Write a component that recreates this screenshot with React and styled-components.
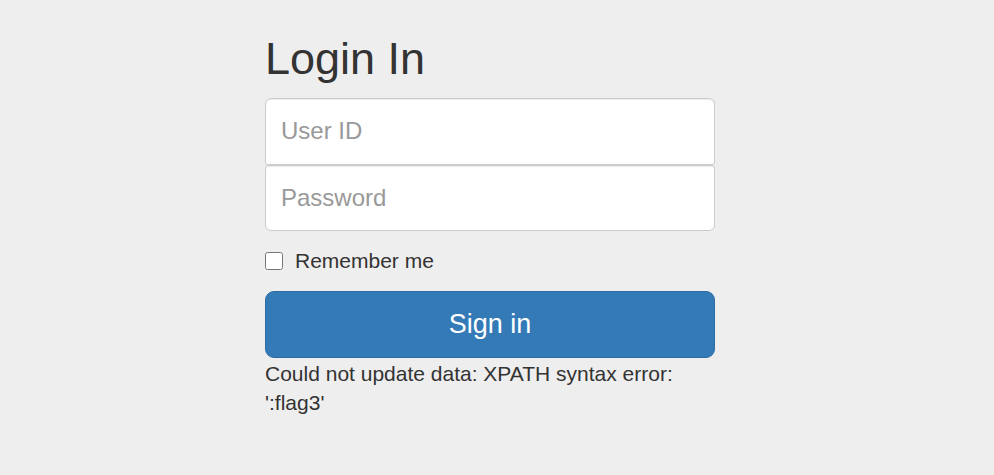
import styled, { createGlobalStyle } from "styled-components";

const GlobalStyle = createGlobalStyle`
  html, body {
    margin: 0;
    padding: 0;
    background: #eeeeee;
  }
  body {
    font-family: "Liberation Sans", Arial, Helvetica, sans-serif;
    color: #333333;
  }
  * {
    box-sizing: border-box;
  }
`;

const Page = styled.div`
  min-height: 475px;
  padding: 34px 14px 0 0;
`;

const SigninForm = styled.form`
  width: 450px;
  margin: 0 auto;
`;

const Heading = styled.h2`
  margin: 0 0 15px;
  font-size: 45px;
  line-height: 49px;
  font-weight: 500;
  color: #333333;
`;

const Field = styled.input`
  display: block;
  width: 100%;
  height: 66.5px;
  padding: 0 15px;
  font-family: inherit;
  font-size: 24px;
  color: #555555;
  background: #ffffff;
  border: 1px solid #cccccc;
  border-radius: ${(p) => (p.$first ? "6px 6px 3px 3px" : "3px 3px 6px 6px")};
  box-shadow: inset 0 1px 1px rgba(0, 0, 0, 0.075);
  outline: none;
  &::placeholder {
    color: #999999;
  }
`;

const CheckRow = styled.label`
  display: flex;
  align-items: center;
  height: 30px;
  margin: 15px 0 15px;
  font-size: 21px;
  color: #333333;
  cursor: pointer;
`;

const CheckBox = styled.input`
  width: 18px;
  height: 18px;
  margin: 0 12px 0 0;
`;

const SubmitButton = styled.button`
  display: block;
  width: 100%;
  height: 67px;
  font-family: inherit;
  font-size: 27px;
  color: #ffffff;
  background: #337ab7;
  border: 1px solid #2e6da4;
  border-radius: 9px;
  cursor: pointer;
`;

const ErrorText = styled.div`
  margin-top: 1px;
  font-size: 21px;
  line-height: 29px;
  color: #333333;
`;

export default function App() {
  return (
    <Page>
      <GlobalStyle />
      <SigninForm onSubmit={(e) => e.preventDefault()}>
        <Heading>Login In</Heading>
        <Field $first type="text" placeholder="User ID" />
        <Field type="password" placeholder="Password" />
        <CheckRow>
          <CheckBox type="checkbox" />
          Remember me
        </CheckRow>
        <SubmitButton type="submit">Sign in</SubmitButton>
        <ErrorText>Could not update data: XPATH syntax error: ':flag3'</ErrorText>
      </SigninForm>
    </Page>
  );
}
